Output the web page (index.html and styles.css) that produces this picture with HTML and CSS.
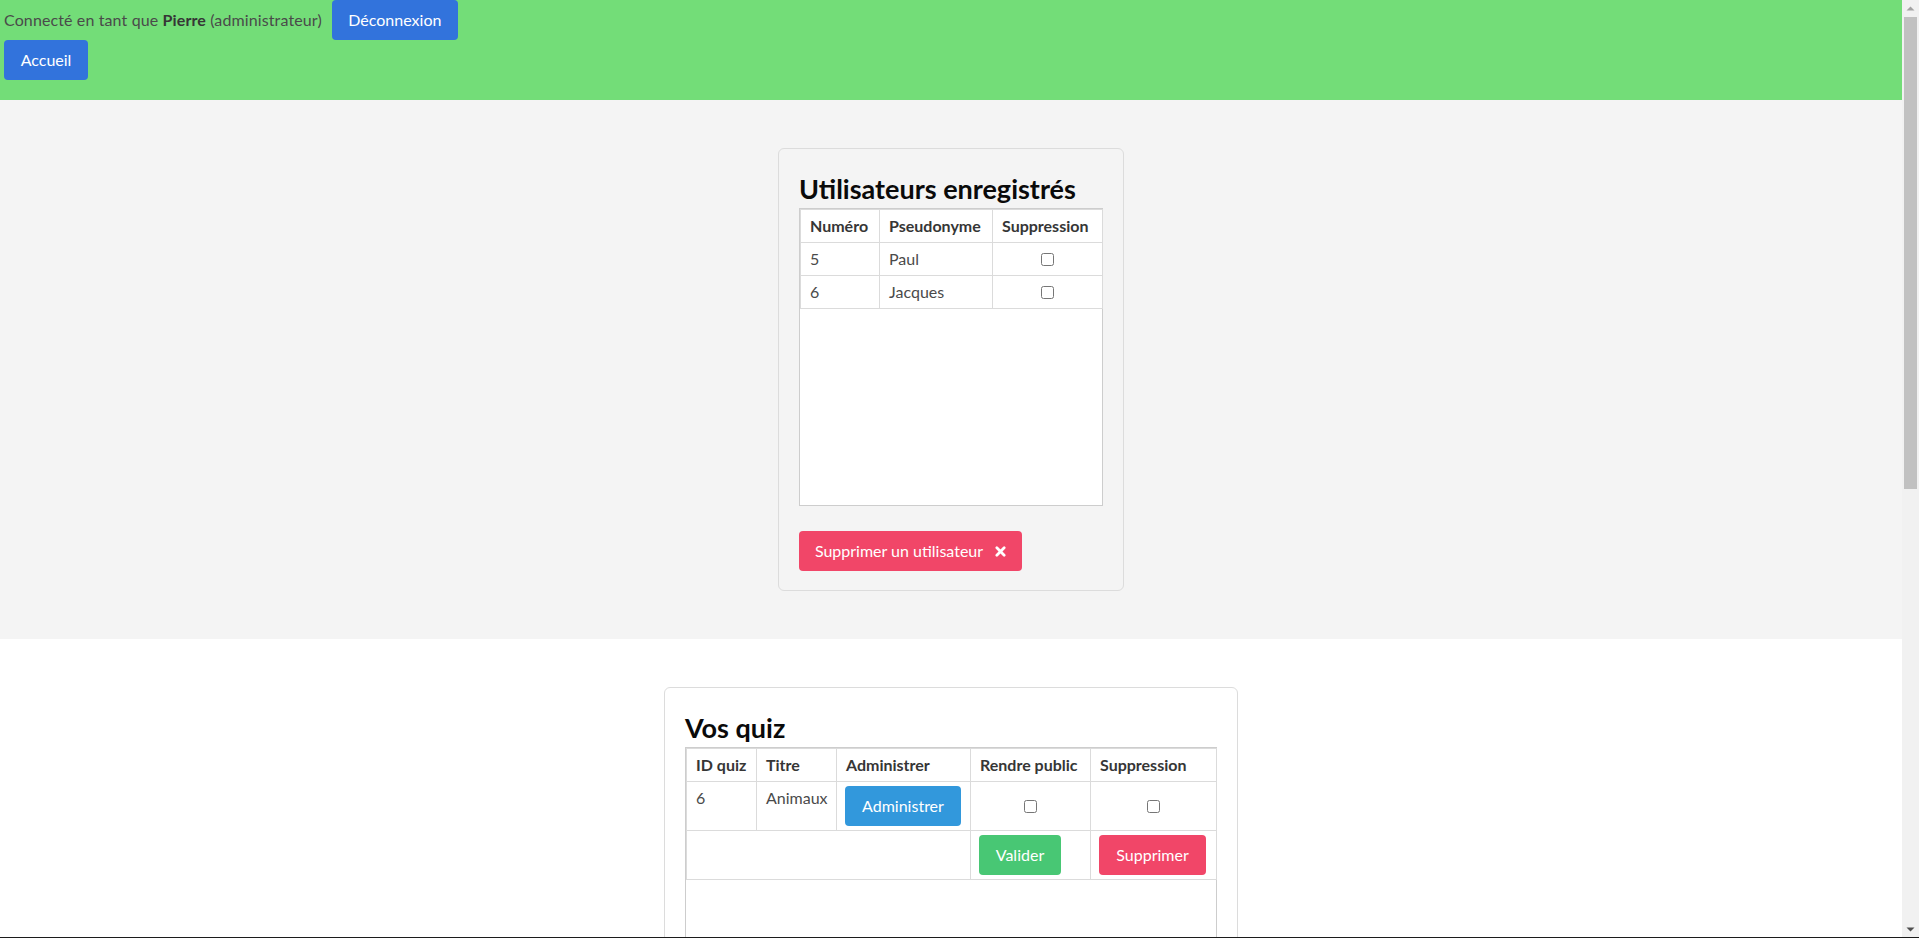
FILE: index.html
```html
<!DOCTYPE html>
<html lang="fr">
<head>
<meta charset="utf-8">
<title>Administration</title>
<link rel="stylesheet" href="styles.css">
</head>
<body>
<header class="topbar">
  <div class="topbar-row">
    <span class="who">Connecté en tant que <strong>Pierre</strong> (administrateur)</span>
    <button class="btn btn-link btn-logout">Déconnexion</button>
  </div>
  <div class="topbar-row">
    <button class="btn btn-link btn-home">Accueil</button>
  </div>
</header>

<section class="section section-grey">
  <div class="box box-users">
    <h2 class="box-title">Utilisateurs enregistrés</h2>
    <div class="table-wrap">
      <table class="data-table">
        <colgroup><col class="c-num"><col class="c-pseudo"><col class="c-del"></colgroup>
        <thead>
          <tr><th>Numéro</th><th>Pseudonyme</th><th>Suppression</th></tr>
        </thead>
        <tbody>
          <tr><td>5</td><td>Paul</td><td class="cell-check"><input type="checkbox"></td></tr>
          <tr><td>6</td><td>Jacques</td><td class="cell-check"><input type="checkbox"></td></tr>
        </tbody>
      </table>
    </div>
    <button class="btn btn-danger btn-deluser">Supprimer un utilisateur
      <svg class="icon-x" viewBox="0 0 12 12" width="11" height="11" aria-hidden="true"><path d="M2 2L10 10M10 2L2 10" stroke="#fff" stroke-width="3" stroke-linecap="round" fill="none"/></svg>
    </button>
  </div>
</section>

<section class="section section-white">
  <div class="box box-quiz">
    <h2 class="box-title">Vos quiz</h2>
    <div class="table-wrap">
      <table class="data-table">
        <colgroup><col class="c-id"><col class="c-title"><col class="c-admin"><col class="c-public"><col class="c-qdel"></colgroup>
        <thead>
          <tr><th>ID quiz</th><th>Titre</th><th>Administrer</th><th>Rendre public</th><th>Suppression</th></tr>
        </thead>
        <tbody>
          <tr class="row-top">
            <td>6</td>
            <td>Animaux</td>
            <td class="cell-btn"><button class="btn btn-info btn-admin">Administrer</button></td>
            <td class="cell-check"><input type="checkbox"></td>
            <td class="cell-check"><input type="checkbox"></td>
          </tr>
          <tr>
            <td colspan="3"></td>
            <td class="cell-btn"><button class="btn btn-success btn-validate">Valider</button></td>
            <td class="cell-btn"><button class="btn btn-danger btn-remove">Supprimer</button></td>
          </tr>
        </tbody>
      </table>
    </div>
  </div>
</section>

<div class="scrollbar" aria-hidden="true">
  <div class="sb-arrow">
    <svg viewBox="0 0 17 17" width="17" height="17"><path d="M4.5 10.5L8.5 6.5L12.5 10.5Z" fill="#a3a3a3"/></svg>
  </div>
  <div class="sb-thumb"></div>
  <div class="sb-space"></div>
  <div class="sb-arrow">
    <svg viewBox="0 0 17 17" width="17" height="17"><path d="M4.5 6.5L8.5 10.5L12.5 6.5Z" fill="#505050"/></svg>
  </div>
</div>
<div class="screen-edge"></div>
</body>
</html>
```

FILE: styles.css
```css
html, body {
  margin: 0;
  padding: 0;
}

body {
  font-family: Lato, "Open Sans", "Liberation Sans", sans-serif;
  font-size: 16px;
  color: #4a4a4a;
  background: #ffffff;
  padding-right: 17px;
}

/* ---------- top bar ---------- */
.topbar {
  background: #73dd78;
  padding: 0 4px 20px;
}

.topbar-row {
  display: flex;
  align-items: center;
  gap: 10px;
  height: 40px;
}

.who {
  line-height: 22px;
  letter-spacing: 0.12px;
}

.who strong {
  color: #363636;
  font-weight: 700;
}

/* ---------- buttons ---------- */
.btn {
  display: inline-flex;
  align-items: center;
  justify-content: center;
  box-sizing: border-box;
  height: 40px;
  padding: 0;
  border: 0;
  border-radius: 4px;
  font-family: inherit;
  font-size: 16px;
  line-height: 24px;
  color: #ffffff;
  cursor: pointer;
}

.btn-link { background: #3273dc; }
.btn-info { background: #3298dc; }
.btn-success { background: #48c774; }
.btn-danger { background: #f14668; }

.btn-logout { width: 126px; }
.btn-home { width: 84px; }
.btn-admin { width: 116px; }
.btn-validate { width: 82px; }
.btn-remove { width: 107px; }

.btn-deluser {
  width: 223px;
  margin-top: 25px;
  gap: 12px;
}

.icon-x {
  display: block;
}

/* ---------- sections & boxes ---------- */
.section {
  display: flex;
  justify-content: center;
  padding: 48px 24px;
}

.section-grey { background: #f4f4f4; }
.section-white { background: #ffffff; }

.box {
  border: 1px solid #dcdcdc;
  border-radius: 6px;
  padding: 20px 20px 19px;
}

.box-users {
  width: 304px;
  background: #f4f4f4;
}

.box-quiz {
  width: 532px;
  background: #ffffff;
}

.box-title {
  margin: 3px 0 2px;
  font-size: 27px;
  line-height: 34px;
  font-weight: 700;
  color: #0a0a0a;
}

/* ---------- tables ---------- */
.table-wrap {
  box-sizing: border-box;
  height: 298px;
  border: 1px solid #cdcdcd;
  background: #ffffff;
}

.data-table {
  width: 100%;
  border-collapse: collapse;
  table-layout: fixed;
}

.data-table th,
.data-table td {
  border: 1px solid #dbdbdb;
  padding: 5px 9px;
  line-height: 22px;
  text-align: left;
  vertical-align: middle;
  white-space: nowrap;
}

.data-table th {
  color: #363636;
  font-weight: 700;
}

.c-num { width: 79px; }
.c-pseudo { width: 113px; }
.c-del { width: 110px; }

.c-id { width: 70px; }
.c-title { width: 80px; }
.c-admin { width: 134px; }
.c-public { width: 120px; }
.c-qdel { width: 126px; }

.row-top td {
  vertical-align: top;
}

.data-table .cell-check {
  text-align: center;
  vertical-align: middle;
}

.cell-check input {
  display: block;
  margin: 0 auto;
  width: 13px;
  height: 13px;
}

.data-table .cell-btn {
  padding: 4px 8px;
  vertical-align: top;
}

.cell-btn .btn {
  display: flex;
}

/* ---------- window chrome ---------- */
.scrollbar {
  position: fixed;
  top: 0;
  right: 0;
  bottom: 0;
  width: 17px;
  display: flex;
  flex-direction: column;
  background: #f1f1f1;
}

.sb-arrow {
  height: 17px;
  flex: none;
}

.sb-arrow svg {
  display: block;
}

.sb-thumb {
  flex: none;
  height: 472px;
  margin: 0 2px;
  background: #c1c1c1;
}

.sb-space {
  flex: 1;
}

.screen-edge {
  position: fixed;
  left: 0;
  right: 0;
  bottom: 0;
  height: 1px;
  background: #1c1c1c;
}
```
